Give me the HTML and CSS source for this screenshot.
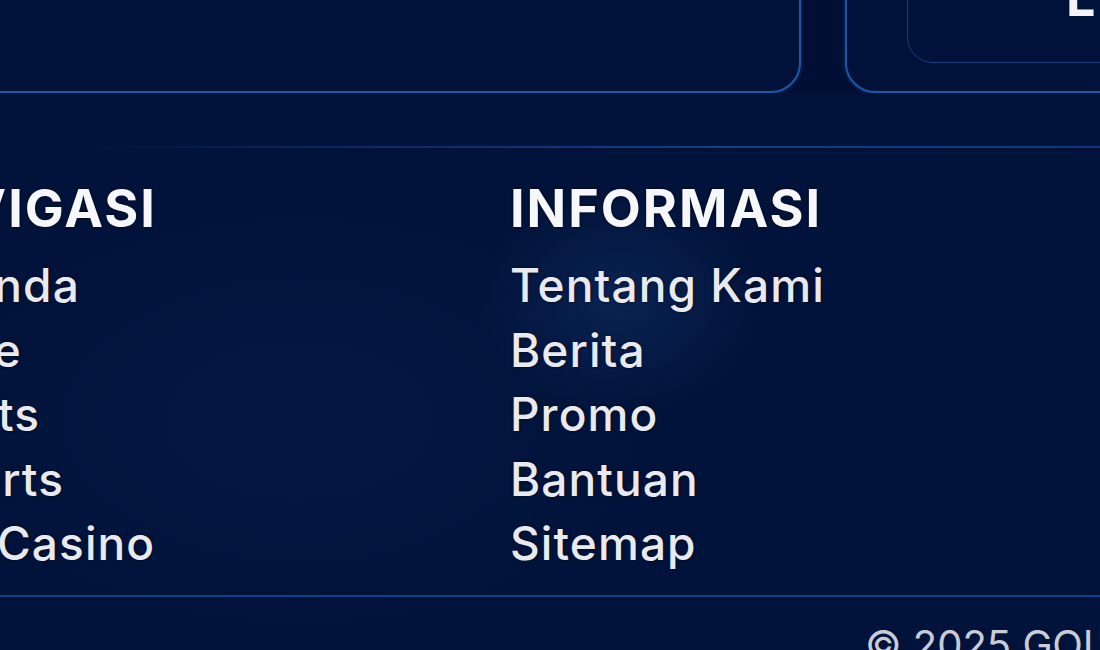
FILE: index.html
```html
<!DOCTYPE html>
<html lang="id">
<head>
<meta charset="utf-8">
<title>Footer</title>
<link rel="stylesheet" href="styles.css">
</head>
<body>
<div class="page">
  <section class="cards">
    <div class="card card-main"></div>
    <div class="card card-side">
      <div class="card-inner"><span class="inner-label">L</span></div>
    </div>
  </section>

  <footer class="footer">
    <div class="footer-cols">
      <nav class="col">
        <h3 class="col-title">NAVIGASI</h3>
        <ul class="col-list">
          <li><a href="#">Beranda</a></li>
          <li><a href="#">Game</a></li>
          <li><a href="#">Sports</a></li>
          <li><a href="#">Esports</a></li>
          <li><a href="#">Live Casino</a></li>
        </ul>
      </nav>
      <nav class="col">
        <h3 class="col-title">INFORMASI</h3>
        <ul class="col-list">
          <li><a href="#">Tentang Kami</a></li>
          <li><a href="#">Berita</a></li>
          <li><a href="#">Promo</a></li>
          <li><a href="#">Bantuan</a></li>
          <li><a href="#">Sitemap</a></li>
        </ul>
      </nav>
    </div>
    <div class="footer-bottom">
      <p class="copyright">© 2025 GOLDBET. All rights reserved.</p>
    </div>
  </footer>
</div>
</body>
</html>
```

FILE: styles.css
```css
* {
  box-sizing: border-box;
}

html, body {
  margin: 0;
  padding: 0;
  height: 100%;
  overflow: hidden;
  background: #01133a;
}

body {
  font-family: "Inter", "Noto Sans", sans-serif;
  color: #f2f3f7;
}

.page {
  width: 1100px;
  height: 650px;
  overflow: hidden;
  background:
    radial-gradient(ellipse 200px 160px at 620px 300px, rgba(24, 60, 120, 0.4), transparent 70%),
    radial-gradient(ellipse 500px 300px at 300px 420px, rgba(10, 36, 88, 0.3), transparent 70%),
    #01133a;
}

/* cards row above the footer, only their lower edges show */
.cards {
  display: flex;
  align-items: flex-end;
  gap: 44px;
  height: 93px;
  overflow: hidden;
  margin-left: -40px;
  background: #000f33;
}

.card {
  flex: none;
  height: 260px;
  border: 2px solid #1d58a6;
  border-radius: 30px;
  background: #00123a;
  box-shadow: 0 0 4px rgba(30, 90, 170, 0.45);
}

.card-main {
  width: 841px;
}

.card-side {
  width: 420px;
  padding: 0 0 28px 60px;
  display: flex;
  align-items: flex-end;
}

.card-inner {
  width: 100%;
  height: 200px;
  border: 1.5px solid #143f7c;
  border-radius: 26px;
  position: relative;
}

.inner-label {
  position: absolute;
  left: 158px;
  bottom: 38px;
  font-size: 52px;
  font-weight: 700;
  line-height: 1;
  color: #f4f4f8;
}

/* footer */
.footer {
  margin-top: 53px;
  background: linear-gradient(90deg, rgba(18, 62, 130, 0) 8%, rgba(18, 62, 130, 0.5) 30%, rgba(20, 72, 145, 0.85) 65%, rgba(20, 72, 145, 0.7) 100%) top / 100% 2px no-repeat;
  padding-top: 31px;
}

.footer-cols {
  display: grid;
  grid-template-columns: 621px 400px;
  margin-left: -111px;
}

.col-title {
  margin: 0 0 12px;
  font-size: 52px;
  line-height: 64px;
  font-weight: 700;
  letter-spacing: 2px;
  color: #f6f7fa;
  text-shadow: 0 0 3px rgba(0, 0, 0, 0.7);
}

.col-list {
  list-style: none;
  margin: 0;
  padding: 0;
}

.col-list li {
  font-size: 46px;
  line-height: 64.5px;
  font-weight: 500;
  letter-spacing: 1.1px;
}

.col-list a {
  color: #e9eaf0;
  text-decoration: none;
  text-shadow: 0 0 3px rgba(0, 0, 0, 0.7);
}

.footer-bottom {
  margin-top: 19px;
  border-top: 2px solid #0d4088;
  padding-top: 24px;
  padding-left: 865px;
}

.copyright {
  margin: 0;
  white-space: nowrap;
  font-size: 40px;
  line-height: 48px;
  color: #c9ccd6;
}
```
